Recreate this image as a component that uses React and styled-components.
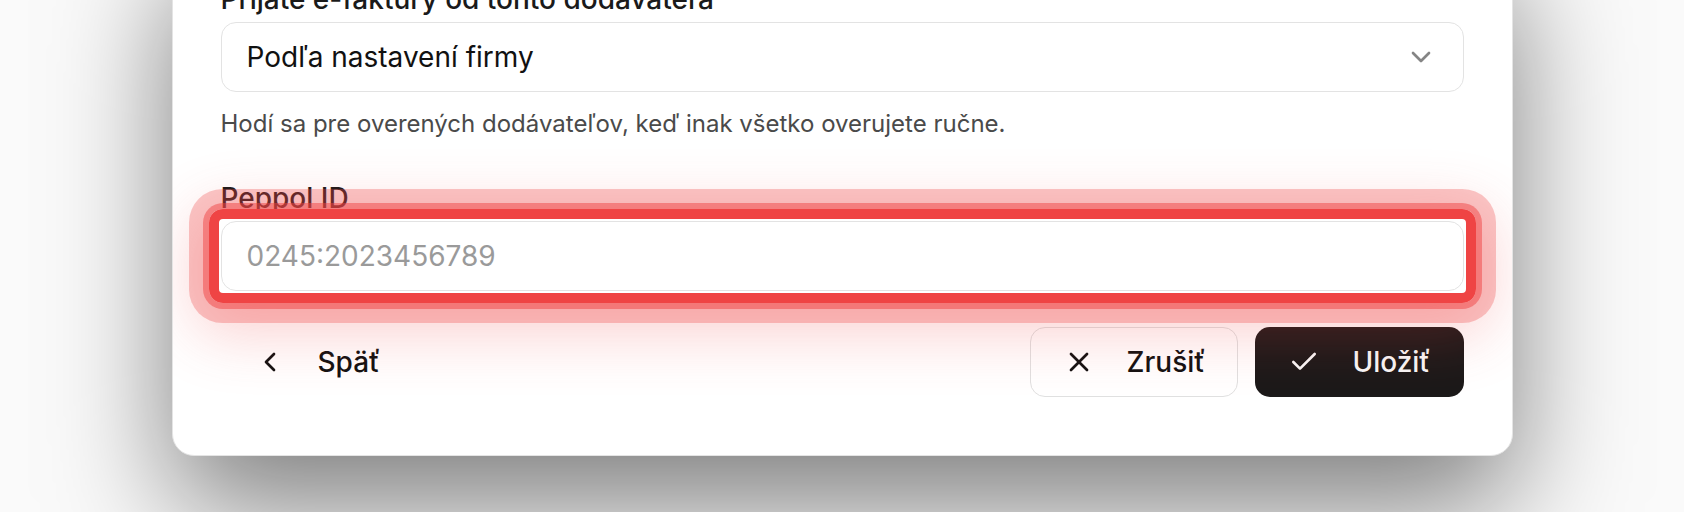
import React from "react";
import styled, { createGlobalStyle } from "styled-components";
import { ChevronDown, ChevronLeft, X, Check } from "lucide-react";

const GlobalStyle = createGlobalStyle`
  html, body {
    margin: 0;
    padding: 0;
    background: #fafafa;
    overflow: hidden;
  }
  body {
    font-family: Inter, "Noto Sans", sans-serif;
    color: #111111;
  }
`;

const Page = styled.div`
  width: 1684px;
  height: 512px;
  display: flex;
  justify-content: center;
  align-items: flex-start;
`;

const Card = styled.div`
  width: 1341px;
  box-sizing: border-box;
  margin-top: -67px;
  padding: 48px 48px 58px;
  background: #ffffff;
  border: 1px solid #e4e4e4;
  border-radius: 22px;
  box-shadow: 0 50px 120px rgba(0, 0, 0, 0.5);
  overflow: hidden;
  display: flex;
  flex-flow: column nowrap;
`;

const Field = styled.div`
  display: flex;
  flex-flow: column nowrap;
  margin-top: ${(p) => p.$gap || 0}px;
`;

const Label = styled.div`
  margin-bottom: 6px;
  font-size: 28px;
  line-height: 34px;
  font-weight: 500;
  color: #1a1a1a;
`;

const SelectBox = styled.div`
  height: 70px;
  box-sizing: border-box;
  padding: 0 26px 0 25px;
  display: flex;
  align-items: center;
  justify-content: space-between;
  background: #ffffff;
  border: 1px solid #e3e3e3;
  border-radius: 15px;
  font-size: 28px;
  color: #111111;
`;

const Hint = styled.div`
  margin-top: 16px;
  font-size: 24px;
  line-height: 32px;
  color: #4a4a4a;
`;

const InputWrap = styled.div`
  position: relative;
`;

const Input = styled.input`
  width: 100%;
  height: 70px;
  box-sizing: border-box;
  padding: 0 25px;
  background: #ffffff;
  border: 1px solid #e3e3e3;
  border-radius: 15px;
  font-family: Inter, "Noto Sans", sans-serif;
  font-size: 28px;
  color: #111111;
  outline: none;

  &::placeholder {
    color: #9a9a9a;
  }
`;

const Highlight = styled.div`
  position: absolute;
  inset: -12px;
  z-index: 2;
  pointer-events: none;
  border: 10px solid #ef4444;
  border-radius: 14px;
  box-shadow: 0 0 0 6px rgba(239, 68, 68, 0.5),
    0 0 0 20px rgba(239, 68, 68, 0.3),
    0 16px 60px 16px rgba(239, 68, 68, 0.24);
`;

const Actions = styled.div`
  margin-top: 36px;
  display: flex;
  justify-content: space-between;
  align-items: center;
`;

const Group = styled.div`
  display: flex;
  gap: 17px;
`;

const Button = styled.button`
  height: 70px;
  box-sizing: border-box;
  padding: 0 32px;
  display: flex;
  align-items: center;
  gap: 32px;
  border-radius: 15px;
  font-family: Inter, "Noto Sans", sans-serif;
  font-size: 28px;
  font-weight: 500;
  cursor: pointer;
  border: 1px solid
    ${(p) => (p.$variant === "outline" ? "#e0e0e0" : "transparent")};
  background: ${(p) =>
    p.$variant === "primary"
      ? "#1b1919"
      : p.$variant === "outline"
      ? "#ffffff"
      : "transparent"};
  color: ${(p) => (p.$variant === "primary" ? "#f7f7f7" : "#111111")};
`;

const App = () => {
  return (
    <>
      <GlobalStyle />
      <Page>
        <Card>
          <Field>
            <Label>Prijaté e-faktúry od tohto dodávateľa</Label>
            <SelectBox>
              <span>Podľa nastavení firmy</span>
              <ChevronDown size={32} strokeWidth={2} color="#858585" />
            </SelectBox>
            <Hint>
              Hodí sa pre overených dodávateľov, keď inak všetko overujete ručne.
            </Hint>
          </Field>
          <Field $gap={41}>
            <Label>Peppol ID</Label>
            <InputWrap>
              <Input placeholder="0245:2023456789" />
              <Highlight />
            </InputWrap>
          </Field>
          <Actions>
            <Button $variant="ghost">
              <ChevronLeft size={32} strokeWidth={2} />
              Späť
            </Button>
            <Group>
              <Button $variant="outline">
                <X size={32} strokeWidth={2} />
                Zrušiť
              </Button>
              <Button $variant="primary">
                <Check size={32} strokeWidth={2} />
                Uložiť
              </Button>
            </Group>
          </Actions>
        </Card>
      </Page>
    </>
  );
};

export default App;
